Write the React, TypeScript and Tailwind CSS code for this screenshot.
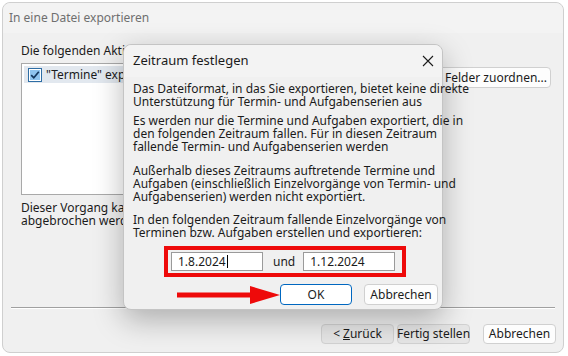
import React from 'react';

const font = { fontFamily: '"Noto Sans", "Open Sans", sans-serif' };

function CheckBox() {
  return (
    <svg width="14" height="14" viewBox="0 0 14 14" className="shrink-0">
      <rect x="0.5" y="0.5" width="13" height="13" fill="#ffffff" stroke="#2f6ea5" />
      <rect x="2" y="2" width="10" height="10" fill="#8ec3ef" />
      <path d="M3.2 7.2 L5.8 9.8 L10.8 3.8" fill="none" stroke="#12355c" strokeWidth="1.7" />
    </svg>
  );
}

function WinButton({ children, variant = 'plain', className = '' }: { children: React.ReactNode; variant?: 'plain' | 'gray' | 'primary'; className?: string }) {
  const look =
    variant === 'primary'
      ? 'bg-white border-[#0067c0] border-[1.5px]'
      : variant === 'gray'
      ? 'bg-[#e6e6e6] border-[#d2d2d2]'
      : 'bg-[#fdfdfd] border-[#d0d0d0]';
  return (
    <button className={`flex h-[20px] shrink-0 items-center rounded-[4px] border text-[12px] text-[#1b1b1b] ${look} ${className}`}>
      {children}
    </button>
  );
}

function DateField({ value, caret }: { value: string; caret?: boolean }) {
  return (
    <div className="flex h-[19px] w-[92px] items-center border border-[#9a9a9a] bg-white pl-[6px] text-[12px] text-[#1b1b1b]">
      <span>{value}</span>
      {caret && <span className="ml-[1px] h-[13px] w-px bg-black" />}
    </div>
  );
}

export default function App() {
  return (
    <div className="relative h-[356px] w-[568px] overflow-hidden bg-white" style={font}>
      {/* Main window */}
      <div className="ml-[2px] mt-[2px] flex h-[351px] w-[562px] flex-col rounded-[8px] border border-[#cfcfcf] bg-[#f0f0f0]">
        <div className="flex h-[30px] items-center rounded-t-[8px] bg-[#f3f3f3] pl-[6px] text-[12px] text-[#6f6f6f]">
          In eine Datei exportieren
        </div>

        <div className="flex flex-1 flex-col px-[18px] text-[12px] text-[#1b1b1b]">
          <div className="mt-[10px] leading-[16px]">Die folgenden Aktionen werden ausgeführt:</div>
          <div className="mr-[-6px] mt-[4px] flex justify-between">
            <div className="h-[132px] w-[280px] border border-[#a9a9a9] bg-white p-[2px]">
              <div className="flex h-[17px] items-center gap-[4px] bg-[#e2e8ef] pl-[4px]">
                <CheckBox />
                <span>"Termine" exportieren</span>
              </div>
            </div>
            <WinButton className="mt-[4px] h-[21px] w-[240px] justify-end whitespace-nowrap pr-[3px]">Benutzerdefinierte Felder zuordnen...</WinButton>
          </div>
          <div className="mt-[6px] leading-[13px]">
            <div>Dieser Vorgang kann einige Minuten dauern und</div>
            <div>abgebrochen werden.</div>
          </div>

          <div className="mx-[-10px] mt-auto border-t border-b border-t-[#a0a0a0] border-b-white" />
          <div className="mb-[8px] mr-[-11px] mt-[15px] flex justify-end">
            <WinButton variant="gray" className="w-[73px] justify-center">
              &lt; <span className="ml-[3px] underline">Z</span>urück
            </WinButton>
            <WinButton variant="gray" className="ml-[3px] w-[73px] justify-center whitespace-nowrap">Fertig stellen</WinButton>
            <WinButton className="ml-[13px] w-[73px] justify-center">Abbrechen</WinButton>
          </div>
        </div>
      </div>

      {/* Dialog: Zeitraum festlegen */}
      <div className="absolute left-[123px] top-[44px] flex h-[266px] w-[320px] flex-col rounded-[8px] border border-[#c4c4c4] bg-[#f0f0f0] shadow-[0_10px_30px_rgba(0,0,0,0.28)]">
        <div className="flex h-[32px] items-center justify-between rounded-t-[8px] bg-[#f3f3f3] pl-[9px] pr-[8px]">
          <span className="text-[13px] text-[#1b1b1b]">Zeitraum festlegen</span>
          <svg width="12" height="12" viewBox="0 0 12 12">
            <path d="M1 1 L11 11 M11 1 L1 11" stroke="#1b1b1b" strokeWidth="1.1" />
          </svg>
        </div>

        <div className="flex flex-1 flex-col px-[9px] pt-[5px] text-[12px] leading-[13px] text-[#1b1b1b] whitespace-nowrap">
          <div>
            <div>Das Dateiformat, in das Sie exportieren, bietet keine direkte</div>
            <div>Unterstützung für Termin- und Aufgabenserien aus</div>
          </div>
          <div className="mt-[6px]">
            <div>Es werden nur die Termine und Aufgaben exportiert, die in</div>
            <div>den folgenden Zeitraum fallen. Für in diesen Zeitraum</div>
            <div>fallende Termin- und Aufgabenserien werden</div>
          </div>
          <div className="mt-[11px]">
            <div>Außerhalb dieses Zeitraums auftretende Termine und</div>
            <div>Aufgaben (einschließlich Einzelvorgänge von Termin- und</div>
            <div>Aufgabenserien) werden nicht exportiert.</div>
          </div>
          <div className="mt-[10px]">
            <div>In den folgenden Zeitraum fallende Einzelvorgänge von</div>
            <div>Terminen bzw. Aufgaben erstellen und exportieren:</div>
          </div>

          <div className="ml-[31px] mt-[7px] flex h-[31px] w-[242px] items-center border-4 border-[#ee0a0a] pl-[3px]">
            <DateField value="1.8.2024" caret />
            <span className="ml-[10px]">und</span>
            <div className="ml-[8px]">
              <DateField value="1.12.2024" />
            </div>
          </div>

          <div className="mt-[7px] flex items-center">
            <svg width="103" height="18" viewBox="0 0 103 18" className="ml-[44px] shrink-0">
              <rect x="0" y="6.5" width="75" height="5" fill="#ee0a0a" />
              <path d="M73 0 L103 9 L73 18 Z" fill="#ee0a0a" />
            </svg>
            <WinButton variant="primary" className="h-[21px] w-[72px] justify-center">OK</WinButton>
            <WinButton className="ml-[12px] h-[21px] w-[74px] justify-center">Abbrechen</WinButton>
          </div>
        </div>
      </div>
    </div>
  );
}
